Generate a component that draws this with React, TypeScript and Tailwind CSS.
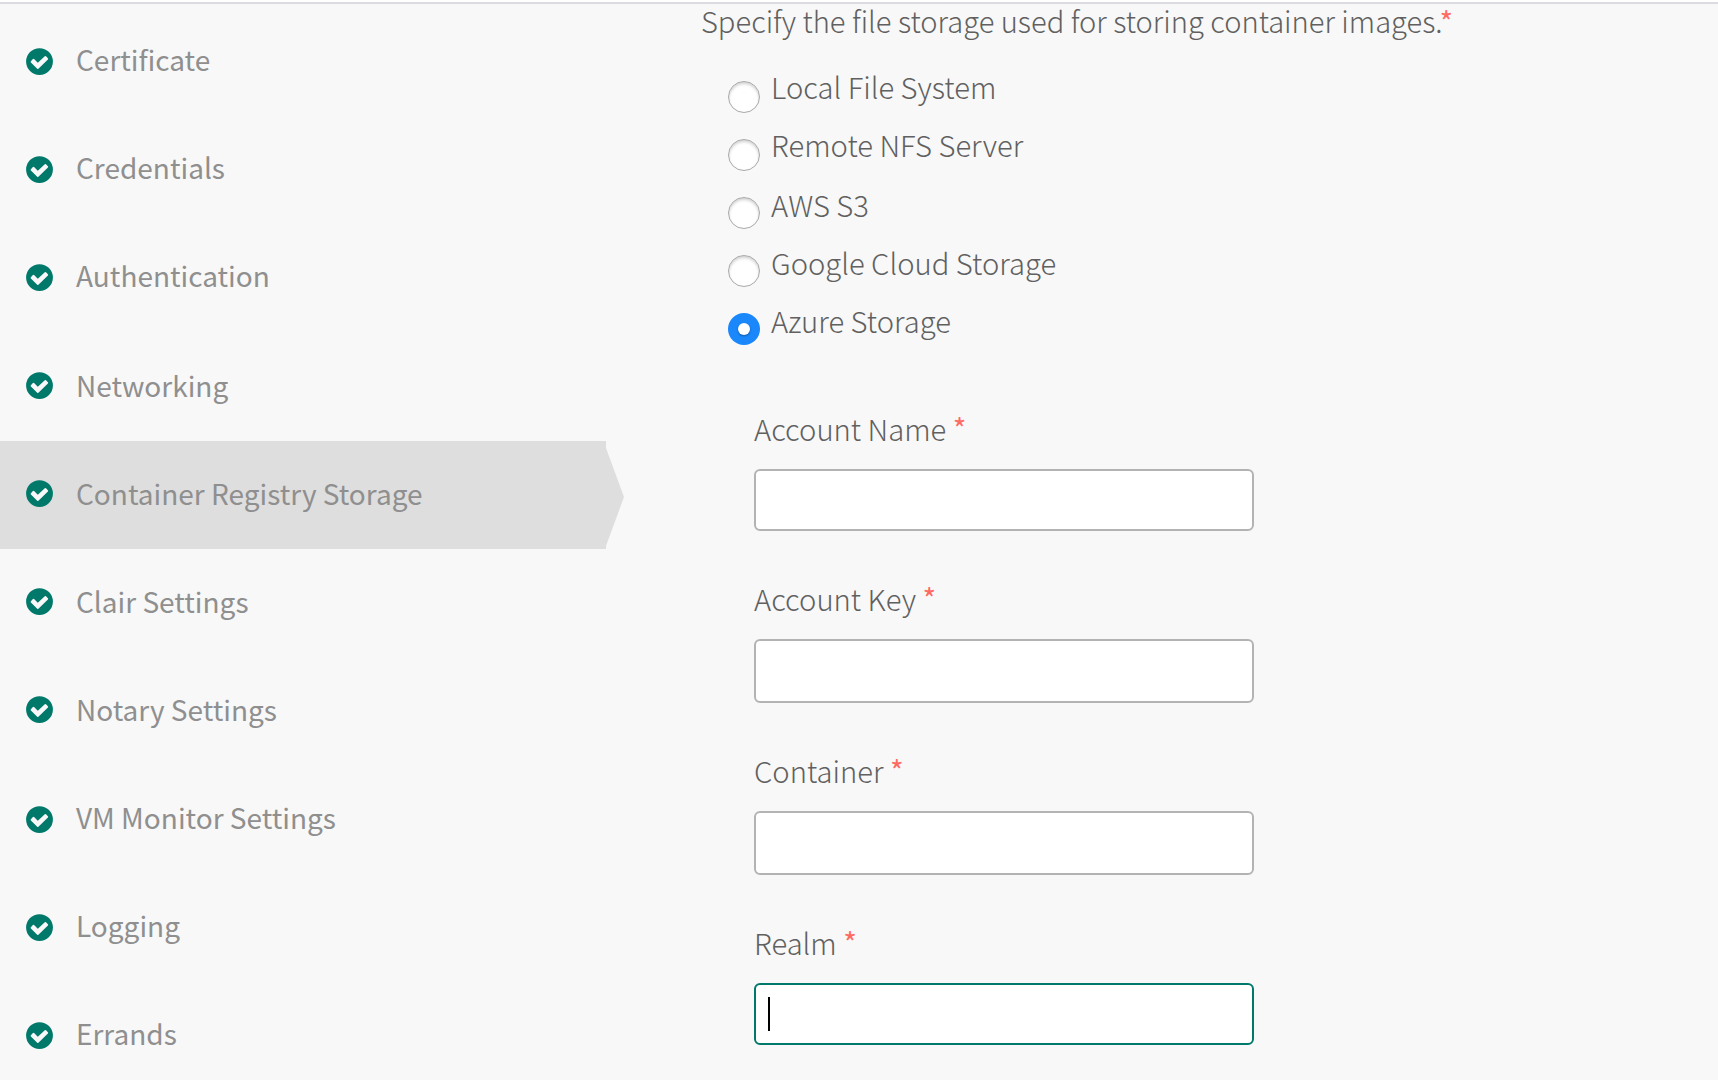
import React from 'react';

type Step = { label: string; active?: boolean; text: string; row: string };

const high = 'mt-[31px]';
const low = 'mt-[33px]';

const steps: Step[] = [
  { label: 'Certificate', text: high, row: '' },
  { label: 'Credentials', text: high, row: '' },
  { label: 'Authentication', text: high, row: '' },
  { label: 'Networking', text: low, row: '' },
  { label: 'Container Registry Storage', text: low, row: '', active: true },
  { label: 'Clair Settings', text: low, row: '' },
  { label: 'Notary Settings', text: low, row: '' },
  { label: 'VM Monitor Settings', text: high, row: 'mt-0.5' },
  { label: 'Logging', text: high, row: '' },
  { label: 'Errands', text: high, row: '' },
];

const options = [
  { label: 'Local File System', nudge: 'mt-[-15px]' },
  { label: 'Remote NFS Server', nudge: 'mt-[-15px]' },
  { label: 'AWS S3', nudge: 'mt-[-13px]' },
  { label: 'Google Cloud Storage', nudge: 'mt-[-13px]' },
  { label: 'Azure Storage', nudge: 'mt-[-13px]', checked: true },
];

const fields = [
  { label: 'Account Name', box: 'h-[62px]', gap: 'mt-[63px]' },
  { label: 'Account Key', box: 'h-16', gap: 'mt-[47px]' },
  { label: 'Container', box: 'h-16', gap: 'mt-[47px]' },
  { label: 'Realm', box: 'h-[62px]', gap: 'mt-[47px]', focused: true },
];

function CheckBadge() {
  return (
    <svg viewBox="0 0 27 27" className="mt-[39px] ml-[26px] size-[27px] shrink-0">
      <circle cx="13.5" cy="13.6" r="13.4" fill="#00796b" />
      <path
        d="M4.9 13.2 L6.9 11.1 Q7.5 10.6 8.1 11.1 L11.8 14.7 L18.8 8.3 Q19.4 7.8 20 8.3 L21.9 10.2 Q22.4 10.8 21.9 11.4 L12.4 20.8 Q11.8 21.4 11.2 20.8 L4.9 14.5 Q4.3 13.8 4.9 13.2 Z"
        fill="#f8f8f8"
      />
    </svg>
  );
}

function Radio({ checked }: { checked?: boolean }) {
  if (checked) {
    return (
      <span className="flex size-8 shrink-0 items-center justify-center rounded-full bg-[#1a87fb]">
        <span className="size-3 rounded-full bg-white shadow-[0_1px_2px_rgba(0,0,0,0.35)]" />
      </span>
    );
  }
  return (
    <span className="size-8 shrink-0 rounded-full border border-[#a9a9a9] bg-white shadow-[inset_0_2px_3px_rgba(0,0,0,0.18)]" />
  );
}

function Required({ className = '' }: { className?: string }) {
  return <span className={`font-normal text-[#ff6b63] ${className}`}>*</span>;
}

export default function App() {
  return (
    <div className="flex h-[1080px] w-[1718px] flex-col overflow-hidden bg-[#f8f8f8] font-['Noto_Sans_CJK_SC','Noto_Sans',sans-serif] whitespace-nowrap">
      <div className="h-1 shrink-0 border-b-2 border-[#dcdbe2] bg-white" />
      <div className="flex min-h-0 flex-1">
        <nav className="w-[701px] shrink-0 pt-[5px]">
          {steps.map((s) => (
            <a key={s.label} className={`relative flex h-[108px] w-[606px] items-start text-[28px] leading-[38px] text-[#8f8f8f] ${s.row} ${s.active ? 'bg-[#dedede]' : ''}`}>
              <CheckBadge />
              <span className={`ml-[23px] ${s.text}`}>{s.label}</span>
              {s.active && (
                <svg viewBox="0 0 18 98" className="absolute top-[7px] left-[606px] h-[98px] w-[18px]">
                  <path d="M0 0 L18 49 L0 98 Z" fill="#dedede" />
                </svg>
              )}
            </a>
          ))}
        </nav>

        <main className="flex flex-col text-[29.2px] leading-[40px] font-light text-[#606060]">
          <p className="-mt-[4px] text-[29.1px]">
            Specify the file storage used for storing container images.
            <Required className="-ml-[3px]" />
          </p>
          <div className="mt-[41px] ml-[27px] flex flex-col gap-[26px]">
            {options.map((o) => (
              <label key={o.label} className="flex h-8 items-start">
                <Radio checked={o.checked} />
                <span className={`ml-[11px] ${o.nudge}`}>{o.label}</span>
              </label>
            ))}
          </div>
          <div className="ml-[53px]">
            {fields.map((f) => (
              <div key={f.label} className={f.gap}>
                <div className="h-[40px]">
                  {f.label} <Required className="relative -top-px" />
                </div>
                <div className={`mt-[21px] flex w-[500px] items-center rounded-md border-2 bg-white pl-3 ${f.box} ${f.focused ? 'border-[#00796b]' : 'border-[#b3b3b3]'}`}>
                  {f.focused && <span className="h-[34px] w-0.5 bg-black" />}
                </div>
              </div>
            ))}
          </div>
        </main>
      </div>
    </div>
  );
}
